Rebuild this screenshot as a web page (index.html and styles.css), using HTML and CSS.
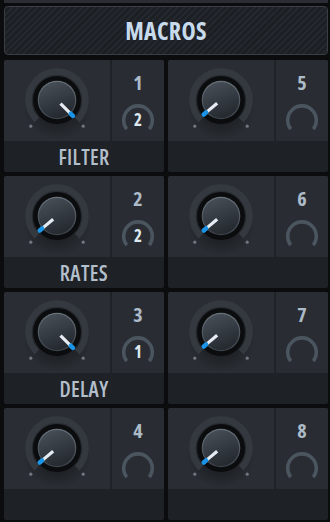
FILE: index.html
```html
<!DOCTYPE html>
<html>
<head>
<meta charset="utf-8">
<link rel="stylesheet" href="styles.css">
</head>
<body>
<svg width="0" height="0" class="defs">
  <defs>
    <radialGradient id="shadow" cx="50%" cy="50%" r="50%">
      <stop offset="0%" stop-color="#000" stop-opacity="0.55"/>
      <stop offset="100%" stop-color="#000" stop-opacity="0"/>
    </radialGradient>
    <linearGradient id="cap" x1="0" y1="0" x2="0.4" y2="1">
      <stop offset="0%" stop-color="#4a525b"/>
      <stop offset="100%" stop-color="#262b31"/>
    </linearGradient>
    <linearGradient id="rim" x1="0" y1="0" x2="0" y2="1">
      <stop offset="0%" stop-color="#6a737c"/>
      <stop offset="100%" stop-color="#3a4148"/>
    </linearGradient>
    <symbol id="knobbase" viewBox="0 0 106 81">
      <ellipse cx="53" cy="50" rx="34" ry="30" fill="url(#shadow)"/>
      <path d="M32.85 60.15 A28.5 28.5 0 1 1 73.15 60.15" fill="none" stroke="#34383f" stroke-width="6.5"/>
      <circle cx="26.8" cy="66.2" r="1.6" fill="#707780"/>
      <circle cx="79.2" cy="66.2" r="1.6" fill="#707780"/>
      <circle cx="53" cy="40" r="24" fill="#0b0c0e"/>
      <circle cx="53" cy="40" r="19.3" fill="url(#rim)"/>
      <circle cx="53" cy="40" r="18.1" fill="url(#cap)"/>
    </symbol>
    <symbol id="pointer" viewBox="0 0 106 81">
      <line x1="53" y1="35" x2="53" y2="21.5" stroke="#e6ecf1" stroke-width="3.2"/>
      <line x1="53" y1="20.5" x2="53" y2="17.5" stroke="#1b93e6" stroke-width="4.6" stroke-linecap="round"/>
    </symbol>
  </defs>
</svg>

<div class="top-strip"></div>
<div class="header"><span class="title">MACROS</span></div>

<div class="grid">
  <div class="cell">
    <div class="upper">
      <div class="knob-area">
        <svg class="knob" viewBox="0 0 106 81"><use href="#knobbase"/><g transform="rotate(135 53 40)"><use href="#pointer"/></g></svg>
      </div>
      <div class="divider"></div>
      <div class="num-area">
        <div class="num">1</div>
        <div class="ring"><svg viewBox="0 0 36 36"><path d="M6.8 27.1 A14.3 14.3 0 1 1 29.2 27.1" fill="none" stroke="#4a555f" stroke-width="3.6"/></svg><span class="ring-val">2</span></div>
      </div>
    </div>
    <div class="label">FILTER</div>
  </div>
  <div class="cell">
    <div class="upper">
      <div class="knob-area">
        <svg class="knob" viewBox="0 0 106 81"><use href="#knobbase"/><g transform="rotate(-130 53 40)"><use href="#pointer"/></g></svg>
      </div>
      <div class="divider"></div>
      <div class="num-area">
        <div class="num">5</div>
        <div class="ring"><svg viewBox="0 0 36 36"><path d="M6.8 27.1 A14.3 14.3 0 1 1 29.2 27.1" fill="none" stroke="#4a555f" stroke-width="3.6"/></svg></div>
      </div>
    </div>
    <div class="label"></div>
  </div>

  <div class="cell">
    <div class="upper">
      <div class="knob-area">
        <svg class="knob" viewBox="0 0 106 81"><use href="#knobbase"/><g transform="rotate(-130 53 40)"><use href="#pointer"/></g></svg>
      </div>
      <div class="divider"></div>
      <div class="num-area">
        <div class="num">2</div>
        <div class="ring"><svg viewBox="0 0 36 36"><path d="M6.8 27.1 A14.3 14.3 0 1 1 29.2 27.1" fill="none" stroke="#4a555f" stroke-width="3.6"/></svg><span class="ring-val">2</span></div>
      </div>
    </div>
    <div class="label">RATES</div>
  </div>
  <div class="cell">
    <div class="upper">
      <div class="knob-area">
        <svg class="knob" viewBox="0 0 106 81"><use href="#knobbase"/><g transform="rotate(-130 53 40)"><use href="#pointer"/></g></svg>
      </div>
      <div class="divider"></div>
      <div class="num-area">
        <div class="num">6</div>
        <div class="ring"><svg viewBox="0 0 36 36"><path d="M6.8 27.1 A14.3 14.3 0 1 1 29.2 27.1" fill="none" stroke="#4a555f" stroke-width="3.6"/></svg></div>
      </div>
    </div>
    <div class="label"></div>
  </div>

  <div class="cell">
    <div class="upper">
      <div class="knob-area">
        <svg class="knob" viewBox="0 0 106 81"><use href="#knobbase"/><g transform="rotate(135 53 40)"><use href="#pointer"/></g></svg>
      </div>
      <div class="divider"></div>
      <div class="num-area">
        <div class="num">3</div>
        <div class="ring"><svg viewBox="0 0 36 36"><path d="M6.8 27.1 A14.3 14.3 0 1 1 29.2 27.1" fill="none" stroke="#4a555f" stroke-width="3.6"/></svg><span class="ring-val">1</span></div>
      </div>
    </div>
    <div class="label">DELAY</div>
  </div>
  <div class="cell">
    <div class="upper">
      <div class="knob-area">
        <svg class="knob" viewBox="0 0 106 81"><use href="#knobbase"/><g transform="rotate(-130 53 40)"><use href="#pointer"/></g></svg>
      </div>
      <div class="divider"></div>
      <div class="num-area">
        <div class="num">7</div>
        <div class="ring"><svg viewBox="0 0 36 36"><path d="M6.8 27.1 A14.3 14.3 0 1 1 29.2 27.1" fill="none" stroke="#4a555f" stroke-width="3.6"/></svg></div>
      </div>
    </div>
    <div class="label"></div>
  </div>

  <div class="cell">
    <div class="upper">
      <div class="knob-area">
        <svg class="knob" viewBox="0 0 106 81"><use href="#knobbase"/><g transform="rotate(-130 53 40)"><use href="#pointer"/></g></svg>
      </div>
      <div class="divider"></div>
      <div class="num-area">
        <div class="num">4</div>
        <div class="ring"><svg viewBox="0 0 36 36"><path d="M6.8 27.1 A14.3 14.3 0 1 1 29.2 27.1" fill="none" stroke="#4a555f" stroke-width="3.6"/></svg></div>
      </div>
    </div>
    <div class="label"></div>
  </div>
  <div class="cell">
    <div class="upper">
      <div class="knob-area">
        <svg class="knob" viewBox="0 0 106 81"><use href="#knobbase"/><g transform="rotate(-130 53 40)"><use href="#pointer"/></g></svg>
      </div>
      <div class="divider"></div>
      <div class="num-area">
        <div class="num">8</div>
        <div class="ring"><svg viewBox="0 0 36 36"><path d="M6.8 27.1 A14.3 14.3 0 1 1 29.2 27.1" fill="none" stroke="#4a555f" stroke-width="3.6"/></svg></div>
      </div>
    </div>
    <div class="label"></div>
  </div>
</div>
</body>
</html>
```

FILE: styles.css
```css
html, body {
  margin: 0;
  padding: 0;
}
body {
  width: 330px;
  height: 522px;
  background: #0b0c0e;
  font-family: "Open Sans", "DejaVu Sans", sans-serif;
  font-stretch: 75%;
  overflow: hidden;
}
.defs {
  position: absolute;
  width: 0;
  height: 0;
}
.top-strip {
  height: 3px;
  margin: 0 2px 0 4px;
  background: #2a2d33;
}
.header {
  box-sizing: border-box;
  height: 49px;
  margin: 3px 2px 0 4px;
  border: 1px solid #3a3e45;
  border-radius: 4px;
  background: repeating-linear-gradient(135deg, #24272d 0px, #24272d 2px, #1c1f24 2px, #1c1f24 4.5px);
  display: flex;
  align-items: center;
  justify-content: center;
}
.title {
  color: #c7dbec;
  font-weight: 700;
  font-size: 24px;
  letter-spacing: 0.3px;
}
.grid {
  display: grid;
  grid-template-columns: 160px 160px;
  grid-auto-rows: 112px;
  gap: 4px;
  padding: 5px 2px 0 4px;
}
.cell {
  display: flex;
  flex-direction: column;
  border-radius: 2px;
  overflow: hidden;
}
.upper {
  display: flex;
  height: 81px;
  background: #2a2e34;
}
.knob-area {
  width: 106px;
  height: 81px;
}
.knob {
  display: block;
  width: 106px;
  height: 81px;
}
.divider {
  width: 2px;
  background: #1f2227;
}
.num-area {
  flex: 1;
  display: flex;
  flex-direction: column;
  align-items: center;
  background: #292d33;
}
.num {
  margin-top: 12px;
  height: 22px;
  line-height: 22px;
  font-size: 20px;
  font-weight: 700;
  color: #adbbc9;
}
.ring {
  position: relative;
  width: 36px;
  height: 36px;
  margin-top: 8px;
}
.ring svg {
  display: block;
  width: 36px;
  height: 36px;
}
.ring-val {
  position: absolute;
  left: 0;
  right: 0;
  top: 7px;
  text-align: center;
  line-height: 22px;
  font-size: 17px;
  font-weight: 700;
  color: #dfe9f2;
}
.label {
  flex: 1;
  background: #1e2126;
  display: flex;
  align-items: center;
  justify-content: center;
  color: #b3bfcb;
  font-size: 21px;
  font-weight: 600;
  letter-spacing: 0.4px;
}
```
